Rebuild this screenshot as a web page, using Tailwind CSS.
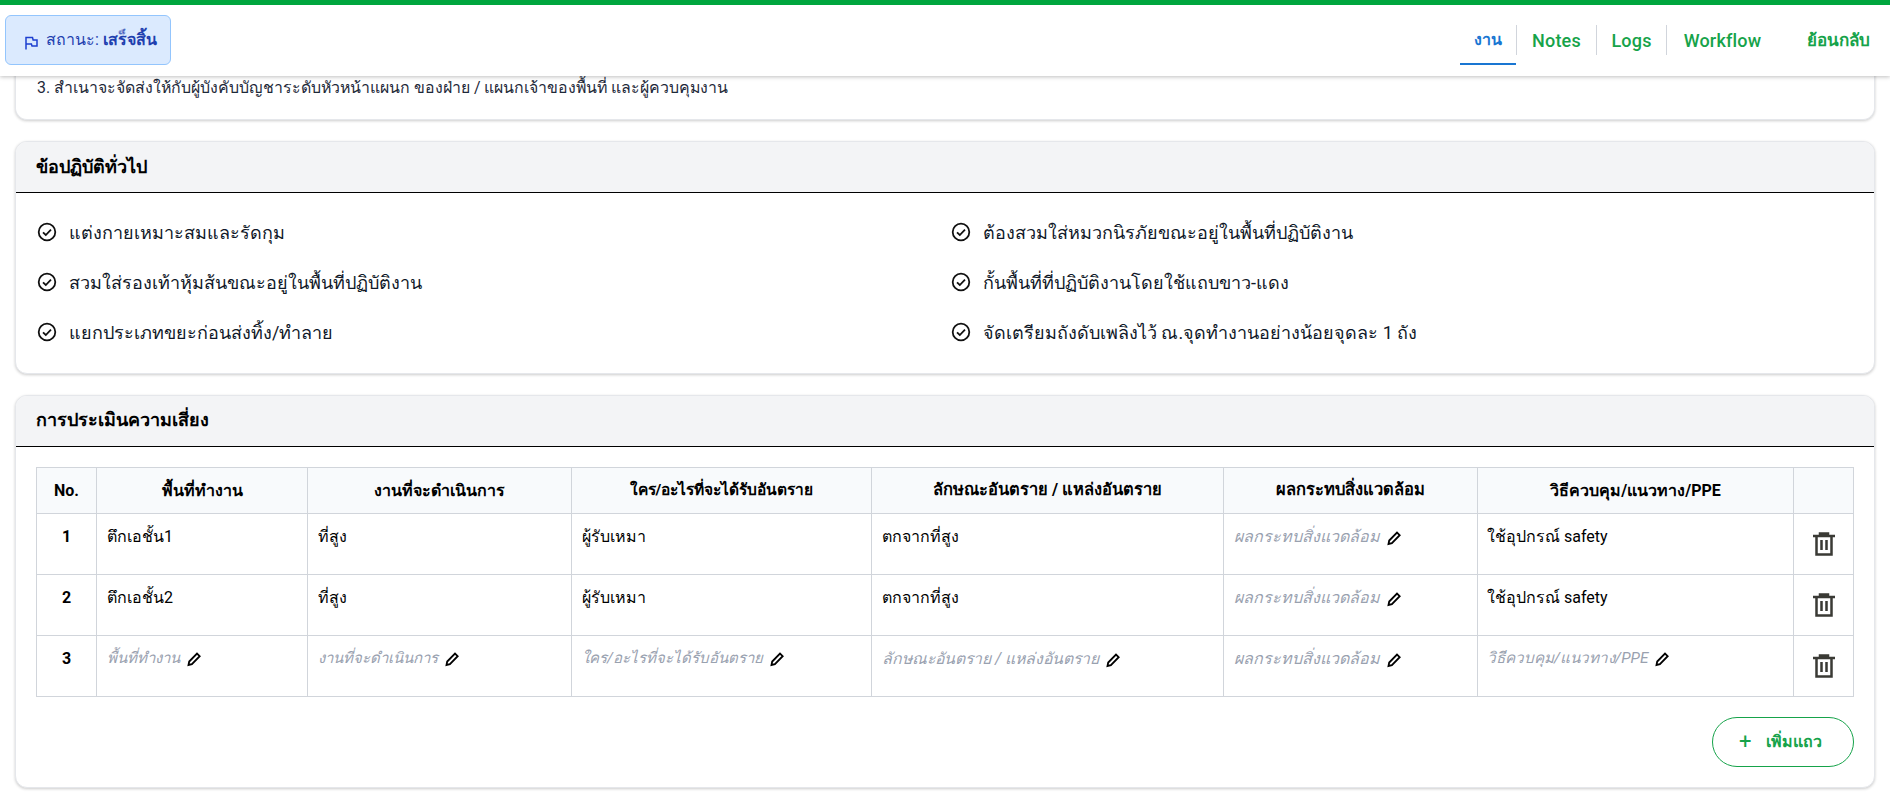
<!DOCTYPE html>
<html lang="th">
  <head>
    <meta charset="UTF-8" />
    <meta name="viewport" content="width=device-width, initial-scale=1.0" />
    <title>Work Permit</title>
    <script src="https://cdn.jsdelivr.net/npm/@tailwindcss/browser@4"></script>
  </head>
  <body class="bg-white h-[806px] overflow-hidden text-black font-['Roboto','Noto_Sans','Liberation_Sans',sans-serif]">
    <!-- top bar -->
    <header class="relative z-10 h-[76px] bg-white border-t-[5px] border-[#00a63e] shadow-[0_1px_4px_rgba(0,0,0,0.25)] flex items-center justify-between pl-[5px] pr-[20px] pb-[1px]">
      <div class="h-[50px] w-[166px] rounded-md bg-[#dbeafe] border border-[#93c5fd] flex items-center pl-[18px] gap-[8px] text-[16px] text-[#1e40af]">
        <svg class="w-[14px] h-[14px] mt-[6px] text-[#1d3fd0]" viewBox="0 0 14 14" fill="none" stroke="currentColor" stroke-width="1.5"><path d="M2 13.500V1.500h6.500l.6 2.500H13v6H8l-.6-2H2" /></svg>
        <span>สถานะ: <b class="font-semibold">เสร็จสิ้น</b></span>
      </div>
      <nav class="flex items-center text-[18px] font-medium text-[#16a34a]">
        <a class="relative w-[57px] h-[30px] flex items-center justify-center text-[16px] font-semibold text-[#1976d2] border-r border-gray-300">งาน
          <span class="absolute left-0 right-0 bottom-[-10px] h-[2px] bg-[#1976d2]"></span>
        </a>
        <a class="w-[80px] h-[30px] flex items-center justify-center border-r border-gray-300 tracking-[0.2px]">Notes</a>
        <a class="w-[70px] h-[30px] flex items-center justify-center border-r border-gray-300 tracking-[0.2px]">Logs</a>
        <a class="w-[111px] h-[30px] flex items-center justify-center tracking-[0.2px]">Workflow</a>
        <a class="ml-[29px] h-[30px] pt-[1px] flex items-center text-[17px] font-semibold">ย้อนกลับ</a>
      </nav>
    </header>

    <main class="px-[15px]">
      <!-- end of the previous card, scrolled under the bar -->
      <section class="-mt-[10px] h-[54px] bg-white border border-gray-200 border-t-0 rounded-b-xl shadow-[0_1px_3px_rgba(0,0,0,0.2)] px-[21px] pt-[10px] text-[15.900px] text-gray-800">
        3. สำเนาจะจัดส่งให้กับผู้บังคับบัญชาระดับหัวหน้าแผนก ของฝ่าย / แผนกเจ้าของพื้นที่ และผู้ควบคุมงาน
      </section>

      <!-- general rules -->
      <section class="mt-[21px] h-[233px] bg-white border border-gray-200 rounded-xl shadow-[0_1px_3px_rgba(0,0,0,0.2)] overflow-hidden">
        <h2 class="h-[51px] bg-[#f3f4f6] border-b border-black px-[20px] pb-[2px] flex items-center text-[18px] font-bold">ข้อปฏิบัติทั่วไป</h2>
        <ul class="grid grid-cols-[914px_1fr] gap-y-[14px] pl-[21px] pt-[21px] text-[18px] text-gray-900">
          <li class="h-[36px] flex items-center gap-[12px]">
            <svg class="w-[20px] h-[20px]" viewBox="0 0 20 20" fill="none" stroke="#111" stroke-width="1.8"><circle cx="10" cy="10" r="8.300" /><path d="M6 10.300l2.800 2.700 5.200-5.400" /></svg>
            แต่งกายเหมาะสมและรัดกุม
          </li>
          <li class="h-[36px] flex items-center gap-[12px]">
            <svg class="w-[20px] h-[20px]" viewBox="0 0 20 20" fill="none" stroke="#111" stroke-width="1.8"><circle cx="10" cy="10" r="8.300" /><path d="M6 10.300l2.800 2.700 5.200-5.400" /></svg>
            ต้องสวมใส่หมวกนิรภัยขณะอยู่ในพื้นที่ปฏิบัติงาน
          </li>
          <li class="h-[36px] flex items-center gap-[12px]">
            <svg class="w-[20px] h-[20px]" viewBox="0 0 20 20" fill="none" stroke="#111" stroke-width="1.8"><circle cx="10" cy="10" r="8.300" /><path d="M6 10.300l2.800 2.700 5.200-5.400" /></svg>
            สวมใส่รองเท้าหุ้มส้นขณะอยู่ในพื้นที่ปฏิบัติงาน
          </li>
          <li class="h-[36px] flex items-center gap-[12px]">
            <svg class="w-[20px] h-[20px]" viewBox="0 0 20 20" fill="none" stroke="#111" stroke-width="1.8"><circle cx="10" cy="10" r="8.300" /><path d="M6 10.300l2.800 2.700 5.200-5.400" /></svg>
            กั้นพื้นที่ที่ปฏิบัติงานโดยใช้แถบขาว-แดง
          </li>
          <li class="h-[36px] flex items-center gap-[12px]">
            <svg class="w-[20px] h-[20px]" viewBox="0 0 20 20" fill="none" stroke="#111" stroke-width="1.8"><circle cx="10" cy="10" r="8.300" /><path d="M6 10.300l2.800 2.700 5.200-5.400" /></svg>
            แยกประเภทขยะก่อนส่งทิ้ง/ทำลาย
          </li>
          <li class="h-[36px] flex items-center gap-[12px]">
            <svg class="w-[20px] h-[20px]" viewBox="0 0 20 20" fill="none" stroke="#111" stroke-width="1.8"><circle cx="10" cy="10" r="8.300" /><path d="M6 10.300l2.800 2.700 5.200-5.400" /></svg>
            จัดเตรียมถังดับเพลิงไว้ ณ.จุดทำงานอย่างน้อยจุดละ 1 ถัง
          </li>
        </ul>
      </section>

      <!-- risk assessment -->
      <section class="mt-[21px] h-[393px] bg-white border border-gray-200 rounded-xl shadow-[0_1px_3px_rgba(0,0,0,0.2)] overflow-hidden">
        <h2 class="h-[51px] bg-[#f3f4f6] border-b border-black px-[20px] pb-[3px] flex items-center text-[18px] font-bold">การประเมินความเสี่ยง</h2>
        <div class="px-[20px] pt-[20px]">
          <table class="w-full table-fixed border-collapse text-[16px]">
            <colgroup>
              <col class="w-[60px]" /><col class="w-[211px]" /><col class="w-[264px]" /><col class="w-[300px]" /><col class="w-[352px]" /><col class="w-[254px]" /><col class="w-[316px]" /><col />
            </colgroup>
            <thead class="bg-[#f8fafc] font-bold text-[16px]">
              <tr class="h-[46px]">
                <th class="border border-[#d1d5db]">No.</th>
                <th class="border border-[#d1d5db]">พื้นที่ทำงาน</th>
                <th class="border border-[#d1d5db]">งานที่จะดำเนินการ</th>
                <th class="border border-[#d1d5db] text-[15.500px]">ใคร/อะไรที่จะได้รับอันตราย</th>
                <th class="border border-[#d1d5db] text-[16.500px]">ลักษณะอันตราย / แหล่งอันตราย</th>
                <th class="border border-[#d1d5db] text-[16.500px]">ผลกระทบสิ่งแวดล้อม</th>
                <th class="border border-[#d1d5db]">วิธีควบคุม/แนวทาง/PPE</th>
                <th class="border border-[#d1d5db]"></th>
              </tr>
            </thead>
            <tbody class="align-top">
              <tr class="h-[61px]">
                <td class="border border-[#d1d5db] pt-[11px] text-center font-bold">1</td>
                <td class="border border-[#d1d5db] pt-[11px] px-[10px]">ตึกเอชั้น1</td>
                <td class="border border-[#d1d5db] pt-[11px] px-[10px]">ที่สูง</td>
                <td class="border border-[#d1d5db] pt-[11px] px-[10px]">ผู้รับเหมา</td>
                <td class="border border-[#d1d5db] pt-[11px] px-[10px]">ตกจากที่สูง</td>
                <td class="border border-[#d1d5db] pt-[11px] px-[10px] italic text-gray-400">ผลกระทบสิ่งแวดล้อม <svg class="inline w-[16px] h-[16px] ml-[2px]" viewBox="0 0 16 16" fill="none" stroke="#000" stroke-width="1.8"><path d="M2.500 14l.7-3.500L11 2.500l2.700 2.700-7.800 8z" /></svg></td>
                <td class="border border-[#d1d5db] pt-[11px] pl-[9px] pr-[10px]">ใช้อุปกรณ์ safety</td>
                <td class="border border-[#d1d5db] pt-[17px] text-center">
                  <svg class="inline w-[22px] h-[24px]" viewBox="0 0 22 24" fill="none" stroke="#3a3a35" stroke-width="2.500"><path d="M0 4h22M7 4V1.500h8V4M3.500 4v18.500h15V4M8.500 8v10M13.500 8v10" /></svg>
                </td>
              </tr>
              <tr class="h-[61px]">
                <td class="border border-[#d1d5db] pt-[11px] text-center font-bold">2</td>
                <td class="border border-[#d1d5db] pt-[11px] px-[10px]">ตึกเอชั้น2</td>
                <td class="border border-[#d1d5db] pt-[11px] px-[10px]">ที่สูง</td>
                <td class="border border-[#d1d5db] pt-[11px] px-[10px]">ผู้รับเหมา</td>
                <td class="border border-[#d1d5db] pt-[11px] px-[10px]">ตกจากที่สูง</td>
                <td class="border border-[#d1d5db] pt-[11px] px-[10px] italic text-gray-400">ผลกระทบสิ่งแวดล้อม <svg class="inline w-[16px] h-[16px] ml-[2px]" viewBox="0 0 16 16" fill="none" stroke="#000" stroke-width="1.8"><path d="M2.500 14l.7-3.500L11 2.500l2.700 2.700-7.800 8z" /></svg></td>
                <td class="border border-[#d1d5db] pt-[11px] pl-[9px] pr-[10px]">ใช้อุปกรณ์ safety</td>
                <td class="border border-[#d1d5db] pt-[17px] text-center">
                  <svg class="inline w-[22px] h-[24px]" viewBox="0 0 22 24" fill="none" stroke="#3a3a35" stroke-width="2.500"><path d="M0 4h22M7 4V1.500h8V4M3.500 4v18.500h15V4M8.500 8v10M13.500 8v10" /></svg>
                </td>
              </tr>
              <tr class="h-[61px]">
                <td class="border border-[#d1d5db] pt-[11px] text-center font-bold">3</td>
                <td class="border border-[#d1d5db] pt-[11px] px-[10px] italic text-gray-400 text-[15px]">พื้นที่ทำงาน <svg class="inline w-[16px] h-[16px] ml-[2px]" viewBox="0 0 16 16" fill="none" stroke="#000" stroke-width="1.8"><path d="M2.500 14l.7-3.500L11 2.500l2.700 2.700-7.800 8z" /></svg></td>
                <td class="border border-[#d1d5db] pt-[11px] px-[10px] italic text-gray-400 text-[15px]">งานที่จะดำเนินการ <svg class="inline w-[16px] h-[16px] ml-[2px]" viewBox="0 0 16 16" fill="none" stroke="#000" stroke-width="1.8"><path d="M2.500 14l.7-3.500L11 2.500l2.700 2.700-7.800 8z" /></svg></td>
                <td class="border border-[#d1d5db] pt-[11px] px-[10px] italic text-gray-400 text-[15px]">ใคร/อะไรที่จะได้รับอันตราย <svg class="inline w-[16px] h-[16px] ml-[2px]" viewBox="0 0 16 16" fill="none" stroke="#000" stroke-width="1.8"><path d="M2.500 14l.7-3.500L11 2.500l2.700 2.700-7.800 8z" /></svg></td>
                <td class="border border-[#d1d5db] pt-[11px] px-[10px] italic text-gray-400 text-[15.800px]">ลักษณะอันตราย / แหล่งอันตราย <svg class="inline w-[16px] h-[16px] ml-[2px]" viewBox="0 0 16 16" fill="none" stroke="#000" stroke-width="1.8"><path d="M2.500 14l.7-3.500L11 2.500l2.700 2.700-7.800 8z" /></svg></td>
                <td class="border border-[#d1d5db] pt-[11px] px-[10px] italic text-gray-400">ผลกระทบสิ่งแวดล้อม <svg class="inline w-[16px] h-[16px] ml-[2px]" viewBox="0 0 16 16" fill="none" stroke="#000" stroke-width="1.8"><path d="M2.500 14l.7-3.500L11 2.500l2.700 2.700-7.800 8z" /></svg></td>
                <td class="border border-[#d1d5db] pt-[11px] pl-[9px] pr-[10px] italic text-gray-400 text-[15.300px]">วิธีควบคุม/แนวทาง/PPE <svg class="inline w-[16px] h-[16px] ml-[2px]" viewBox="0 0 16 16" fill="none" stroke="#000" stroke-width="1.8"><path d="M2.500 14l.7-3.500L11 2.500l2.700 2.700-7.800 8z" /></svg></td>
                <td class="border border-[#d1d5db] pt-[17px] text-center">
                  <svg class="inline w-[22px] h-[24px]" viewBox="0 0 22 24" fill="none" stroke="#3a3a35" stroke-width="2.500"><path d="M0 4h22M7 4V1.500h8V4M3.500 4v18.500h15V4M8.500 8v10M13.500 8v10" /></svg>
                </td>
              </tr>
            </tbody>
          </table>
          <div class="flex justify-end mt-[20px]">
            <button class="w-[142px] h-[50px] pl-[26px] rounded-full border border-[#16a34a] text-[#16a34a] text-[16px] font-semibold flex items-center justify-start gap-[15px]">
              <span class="text-[22px] font-normal leading-none">+</span> เพิ่มแถว
            </button>
          </div>
        </div>
      </section>
    </main>
  </body>
</html>
